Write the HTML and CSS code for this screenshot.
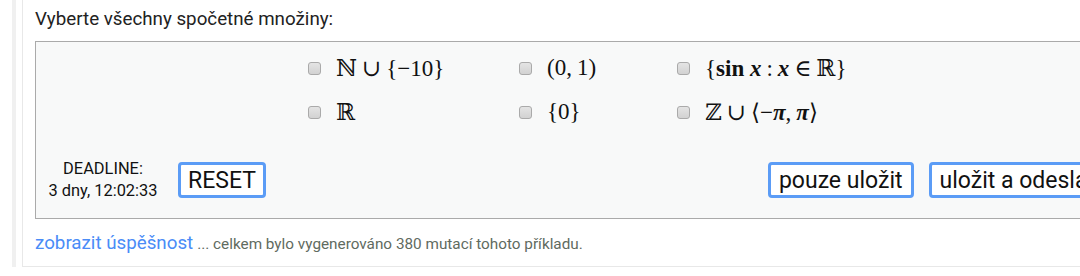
FILE: index.html
```html
<html>
<head>
    <title>Spočetné množiny</title>
    <link rel="stylesheet" href="styles.css">
</head>
<body>
<div class="rail">
<div class="card">
    <div class="question">Vyberte všechny spočetné množiny:</div>
    <div class="box">
        <div class="options">
            <label class="opt"><span class="check"></span><span class="math">ℕ<span class="op">∪</span>{−10}</span></label>
            <label class="opt"><span class="check"></span><span class="math">(0,<span class="sp"></span>1)</span></label>
            <label class="opt"><span class="check"></span><span class="math">{<b>sin</b> <b><i>x</i></b><span class="op">:</span><b><i>x</i></b><span class="op">∈</span>ℝ}</span></label>
            <label class="opt"><span class="check"></span><span class="math">ℝ</span></label>
            <label class="opt"><span class="check"></span><span class="math">{0}</span></label>
            <label class="opt"><span class="check"></span><span class="math">ℤ<span class="op">∪</span>⟨−<b><i>π</i></b>,<span class="sp"></span><b><i>π</i></b>⟩</span></label>
        </div>
        <div class="controls">
            <div class="deadline">DEADLINE:<br>3 dny, 12:02:33</div>
            <button class="btn">RESET</button>
            <div class="actions">
                <button class="btn">pouze uložit</button>
                <button class="btn">uložit a odeslat</button>
            </div>
        </div>
    </div>
    <div class="footer">
        <a href="#" class="stats">zobrazit úspěšnost</a>
        <span class="note">... celkem bylo vygenerováno 380 mutací tohoto příkladu.</span>
    </div>
</div>
</div>
</body>
</html>
```

FILE: styles.css
```css
body {
    margin: 0;
    background-color: #fff;
    font-family: Roboto, 'Liberation Sans', sans-serif;
    color: #222;
    overflow: hidden;
    width: 1080px;
    height: 276px;
}
.rail {
    margin-left: 12px;
    border-left: 4px solid #f0f0f0;
    padding-left: 6px;
}
.card {
    border-left: 1px solid #e8e8e8;
    border-bottom: 1px solid #e8e8e8;
    padding-left: 12px;
    padding-top: 7px;
    width: 1200px;
}
.question {
    font-size: 18.75px;
    line-height: 24px;
    margin-bottom: 10px;
}
.box {
    width: 1100px;
    height: 176px;
    background-color: #f8f9f9;
    border: 1px solid #aaa;
}
.options {
    display: grid;
    grid-template-columns: 211px 158px auto;
    grid-auto-rows: 44px;
    padding-left: 272px;
    padding-top: 4px;
}
.opt {
    display: flex;
    align-items: center;
}
.check {
    width: 11px;
    height: 11px;
    border: 1px solid #aaa;
    border-radius: 3px;
    background: linear-gradient(#e4e4e4, #d2d2d2);
    margin-right: 15px;
}
.math {
    font-family: 'Liberation Serif', 'DejaVu Serif', serif;
    font-size: 23px;
    color: #111;
}
.math i {
    font-style: italic;
}
.op {
    margin: 0 5px;
}
.sp {
    display: inline-block;
    width: 5px;
}
.controls {
    display: flex;
    align-items: center;
    margin-top: 24px;
}
.deadline {
    width: 134px;
    text-align: center;
    font-size: 16.4px;
    line-height: 22px;
    color: #111;
}
.btn {
    font-family: Roboto, 'Liberation Sans', sans-serif;
    font-size: 23px;
    height: 36px;
    padding: 0 7px;
    margin-left: 8px;
    background-color: #fff;
    border: 3px solid #5b9cf6;
    border-radius: 4px;
    color: #111;
}
.actions {
    display: flex;
    gap: 15px;
    margin-left: 502px;
}
.actions .btn {
    margin-left: 0;
    padding: 0 8px;
}
.footer {
    padding: 12px 0 10px;
    line-height: 24px;
}
.stats {
    color: #4a8cf7;
    text-decoration: none;
    font-size: 18.75px;
}
.note {
    color: #5f6b5f;
    font-size: 15.3px;
}
```
